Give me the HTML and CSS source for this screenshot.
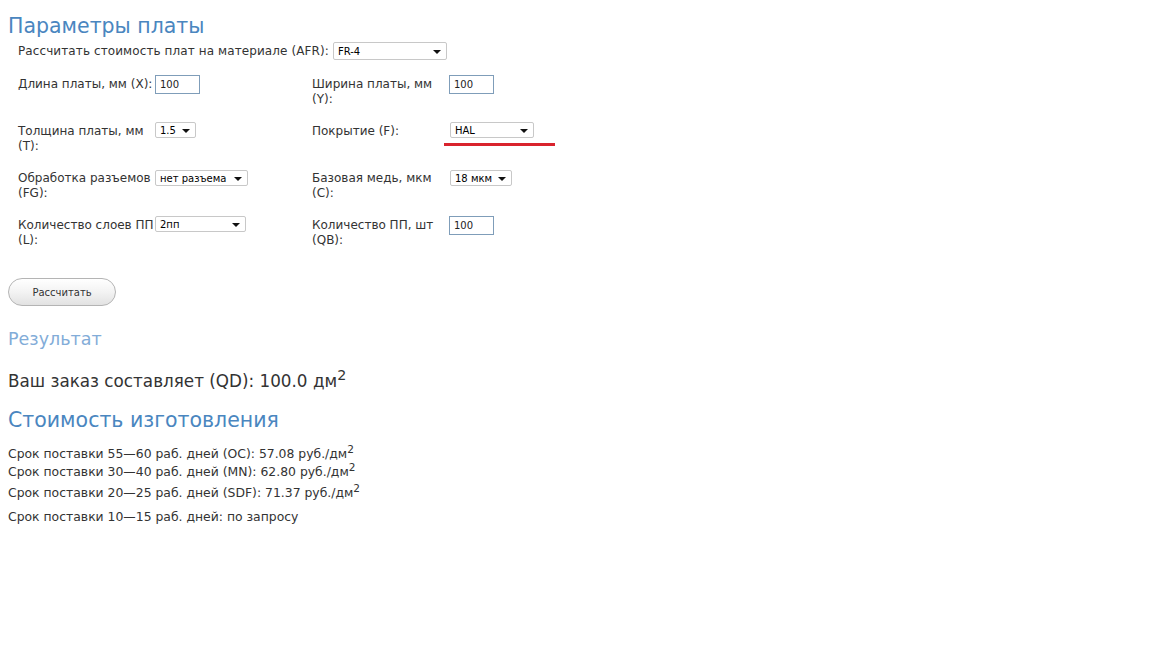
FILE: index.html
```html
<!DOCTYPE html>
<html lang="ru">
<head>
    <meta charset="UTF-8">
    <title>Параметры платы</title>
    <link rel="stylesheet" href="styles.css">
</head>
<body>
    <h1 class="title">Параметры платы</h1>

    <form class="calc">
        <div class="material-row">
            <label for="afr">Рассчитать стоимость плат на материале (AFR):</label>
            <span class="select wide-fr"><select id="afr"><option>FR-4</option></select></span>
        </div>

        <div class="params">
            <label class="param-label" for="x">Длина платы, мм (X):</label>
            <div class="param-field"><input type="text" id="x" class="num" value="100"></div>
            <label class="param-label" for="y">Ширина платы, мм (Y):</label>
            <div class="param-field"><input type="text" id="y" class="num" value="100"></div>

            <label class="param-label" for="t">Толщина платы, мм (T):</label>
            <div class="param-field"><span class="select w-t"><select id="t"><option>1.5</option></select></span></div>
            <label class="param-label" for="f">Покрытие (F):</label>
            <div class="param-field"><span class="select w-f"><select id="f"><option>HAL</option></select></span><div class="mark"></div></div>

            <label class="param-label" for="fg">Обработка разъемов (FG):</label>
            <div class="param-field"><span class="select w-fg"><select id="fg"><option>нет разъема</option></select></span></div>
            <label class="param-label" for="c">Базовая медь, мкм (C):</label>
            <div class="param-field"><span class="select w-c"><select id="c"><option>18 мкм</option></select></span></div>

            <label class="param-label" for="l">Количество слоев ПП (L):</label>
            <div class="param-field"><span class="select w-l"><select id="l"><option>2пп</option></select></span></div>
            <label class="param-label" for="qb">Количество ПП, шт (QB):</label>
            <div class="param-field"><input type="text" id="qb" class="num" value="100"></div>
        </div>

        <button type="button" class="calc-btn">Рассчитать</button>
    </form>

    <h2 class="result-title">Результат</h2>
    <p class="order">Ваш заказ составляет (QD): 100.0 дм<sup>2</sup></p>

    <h1 class="title cost-title">Стоимость изготовления</h1>
    <div class="prices">
        <div>Срок поставки 55—60 раб. дней (OC): 57.08 руб./дм<sup>2</sup></div>
        <div class="p2">Срок поставки 30—40 раб. дней (MN): 62.80 руб./дм<sup>2</sup></div>
        <div class="p3">Срок поставки 20—25 раб. дней (SDF): 71.37 руб./дм<sup>2</sup></div>
        <div class="p4">Срок поставки 10—15 раб. дней: по запросу</div>
    </div>
</body>
</html>
```

FILE: styles.css
```css
body {
    margin: 0;
    padding: 0 8px;
    background: #fff;
    color: #333;
    font-family: "DejaVu Sans", Verdana, sans-serif;
    font-size: 12px;
}

.title {
    margin: 0;
    padding-top: 13px;
    font-size: 20.5px;
    font-weight: normal;
    color: #4a86bf;
    line-height: 26px;
}

.calc {
    padding-left: 10px;
}

.material-row {
    display: flex;
    align-items: center;
    gap: 4px;
    margin-top: 3px;
    height: 17px;
    letter-spacing: 0.1px;
}

.params {
    display: grid;
    grid-template-columns: 137px 157px 137px auto;
    grid-auto-rows: 47px;
    margin-top: 16px;
    line-height: 15px;
}

.param-label {
    padding-top: 2px;
}

.param-field {
    position: relative;
}

.num {
    box-sizing: border-box;
    width: 45px;
    height: 19px;
    border: 1px solid #7f9db9;
    padding: 0 4px;
    font-family: "DejaVu Sans", Verdana, sans-serif;
    font-size: 10px;
    color: #222;
}

.select {
    position: relative;
    display: inline-block;
    vertical-align: top;
    letter-spacing: 0;
}

.select select {
    appearance: none;
    -webkit-appearance: none;
    box-sizing: border-box;
    width: 100%;
    height: 16px;
    margin: 0;
    border: 1px solid #c8c8c8;
    border-radius: 2px;
    background: #fff;
    padding: 1px 0 0 4px;
    font-family: "DejaVu Sans", Verdana, sans-serif;
    font-size: 10px;
    line-height: 13px;
    color: #000;
}

/* стрелка выпадающего списка */
.select::after {
    content: "";
    position: absolute;
    right: 6px;
    top: 7px;
    border-left: 4px solid transparent;
    border-right: 4px solid transparent;
    border-top: 4px solid #111;
    pointer-events: none;
}

.wide-fr { width: 114px; }
.wide-fr select { height: 18px; padding-top: 2px; }
.wide-fr::after { top: 8px; }
.w-t { width: 41px; }
.w-f { width: 84px; margin-left: 1px; }
.w-fg { width: 93px; margin-top: 1px; }
.w-c { width: 62px; margin-left: 1px; margin-top: 1px; }
.w-l { width: 91px; }

.mark {
    position: absolute;
    left: -5px;
    top: 21px;
    width: 111px;
    height: 3px;
    background: #d9232d;
}

.calc-btn {
    display: block;
    margin: 15px 0 0 -10px;
    width: 108px;
    height: 28px;
    border: 1px solid #b4b4b4;
    border-radius: 14px;
    background: linear-gradient(#ffffff, #f3f3f3 50%, #e2e2e2);
    font-family: "DejaVu Sans", Verdana, sans-serif;
    font-size: 10px;
    color: #333;
    cursor: pointer;
}

.result-title {
    margin: 22px 0 0;
    font-size: 17.5px;
    font-weight: normal;
    color: #82acd8;
    line-height: 22px;
}

.order {
    margin: 20px 0 0;
    font-size: 16.8px;
    line-height: 22px;
}

sup {
    font-size: 0.85em;
    line-height: 0;
}

.cost-title {
    padding-top: 15px;
}

.prices {
    margin-top: 12px;
    font-size: 12.4px;
    line-height: 18px;
}

.prices .p3 {
    margin-top: 3px;
}

.prices .p4 {
    margin-top: 6px;
}
```
